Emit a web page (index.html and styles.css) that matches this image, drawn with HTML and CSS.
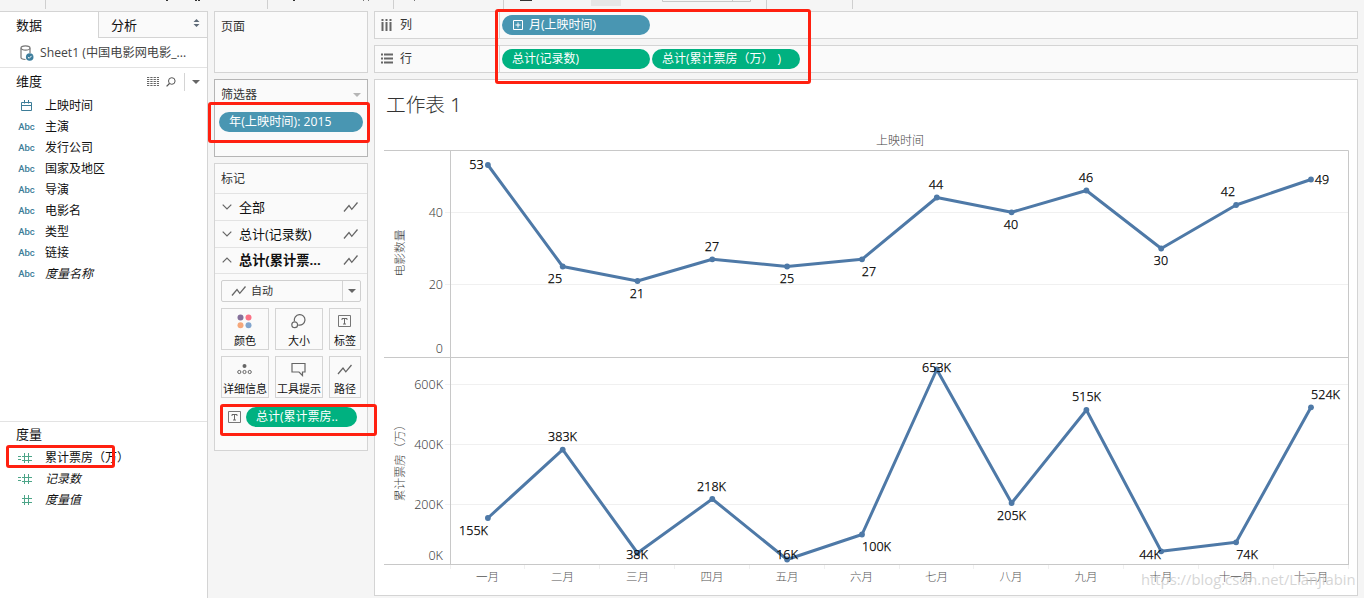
FILE: index.html
```
<!DOCTYPE html>
<html lang="zh-CN">
<head>
  <meta charset="UTF-8" />
  <meta name="viewport" content="width=device-width, initial-scale=1.0">
  <title>工作表 1</title>
  <link rel="stylesheet" href="styles.css">
</head>
<body>

  <!-- shared icons -->
  <svg class="defs" width="0" height="0">
    <symbol id="i-line" viewBox="0 0 16 12"><path d="M1 10.5 6 4.5 8.8 8.3 14.5 1.5" fill="none" stroke="#666" stroke-width="1.3"/></symbol>
    <symbol id="i-down" viewBox="0 0 10 6"><path d="M.7.7 5 5 9.3.7" fill="none" stroke="#666" stroke-width="1.2"/></symbol>
    <symbol id="i-up" viewBox="0 0 10 6"><path d="M.7 5.3 5 1 9.3 5.3" fill="none" stroke="#666" stroke-width="1.2"/></symbol>
    <symbol id="i-label" viewBox="0 0 13 12"><path d="M.5.5h12v11H.5z" fill="none" stroke="#777"/><path d="M4 5V3.500h5V5M6.500 3.500v5.500M5 9h3" fill="none" stroke="#666"/></symbol>
    <symbol id="i-hash" viewBox="0 0 14 10"><path d="M6.5 0v10M10.5 0v10M4 3.5h10M4 7.5h10" fill="none" stroke="#4da588"/></symbol>
    <symbol id="i-hash-calc" viewBox="0 0 14 10"><path d="M6.5 0v10M10.5 0v10M4 3.5h10M4 7.5h10M0 3.5h3M0 6.5h3" fill="none" stroke="#4da588"/></symbol>
  </svg>

  <div class="toolbar">
    <svg width="1364" height="11">
      <path d="M45.5 0v9M267.5 0v9M393.5 0v9M503.5 0v9M766.5 0v9M852.5 0v9" stroke="#cfcfcf"/>
      <path d="M166 0h2v1h-2zM195 0h2v1h-2zM198 0h2v1h-2zM293 0h2v1h-2zM520 0h12v1h-12z" fill="#333"/>
      <path d="M363 0h1v1h-1zM368 0h1v1h-1zM414 0h1v1h-1z" fill="#777"/>
      <path d="M591 0h30v6h-30z" fill="#e6e6e6"/>
      <path d="M662.500 0v1.500h88V0M732.500 0v1" fill="none" stroke="#c8c8c8"/>
    </svg>
  </div>

  <div class="workspace">

    <div class="data-pane">
      <div class="tabs">
        <div class="tab active">数据</div>
        <div class="tab">分析
          <svg width="7" height="8"><path d="M3.500 0 6.500 3h-6zM3.500 8 6.500 5h-6z" fill="#5f6b78"/></svg>
        </div>
      </div>
      <div class="source">
        <svg width="14" height="16" viewBox="0 0 14 16">
          <path d="M1 3.200v9.300c0 1 1.500 1.900 4.500 2M10 3.200V8" fill="none" stroke="#777" stroke-width="1.200"/>
          <ellipse cx="5.500" cy="3" rx="4.500" ry="2.200" fill="none" stroke="#777" stroke-width="1.200"/>
          <circle cx="9.700" cy="12" r="3.800" fill="#3c7d9c"/>
          <path d="M7.900 12.100 9.200 13.300 11.600 10.800" fill="none" stroke="#fff"/>
        </svg>
        <span>Sheet1 (中国电影网电影_...</span>
      </div>

      <div class="dimensions">
        <div class="group-head">
          <h2>维度</h2>
          <svg width="12" height="9"><path d="M0 .5h12M0 2.500h12M0 4.500h12M0 6.500h12M0 8.500h12" stroke="#666" stroke-dasharray="2.300 1"/></svg>
          <svg class="search" width="10" height="10"><circle cx="5.800" cy="4" r="3.300" fill="none" stroke="#555"/><path d="M3.500 6.500.6 9.400" stroke="#555" stroke-width="1.300"/></svg>
          <i class="sep"></i>
          <i class="caret"></i>
        </div>
        <ul class="fields">
          <li><span class="type"><svg width="11" height="11"><path d="M.5 2.500h10v8H.5zM.5 5.500h10M3.500 0v3.500M7.500 0v3.500" fill="none" stroke="#3d7d98"/></svg></span>上映时间</li>
          <li><span class="type">Abc</span>主演</li>
          <li><span class="type">Abc</span>发行公司</li>
          <li><span class="type">Abc</span>国家及地区</li>
          <li><span class="type">Abc</span>导演</li>
          <li><span class="type">Abc</span>电影名</li>
          <li><span class="type">Abc</span>类型</li>
          <li><span class="type">Abc</span>链接</li>
          <li class="italic"><span class="type">Abc</span>度量名称</li>
        </ul>
      </div>

      <div class="measures">
        <div class="group-head"><h2>度量</h2></div>
        <ul class="fields">
          <li class="boxed"><span class="type"><svg width="14" height="10"><use href="#i-hash-calc"/></svg></span>累计票房（万）</li>
          <li class="italic"><span class="type"><svg width="14" height="10"><use href="#i-hash-calc"/></svg></span>记录数</li>
          <li class="italic"><span class="type"><svg width="14" height="10"><use href="#i-hash"/></svg></span>度量值</li>
        </ul>
      </div>
    </div>

    <div class="cards">
      <div class="card pages"><h3>页面</h3></div>

      <div class="card filters">
        <h3>筛选器<i class="caret light"></i></h3>
        <div class="pill blue">年(上映时间): 2015</div>
        <div class="mark-box filter-box"></div>
      </div>

      <div class="card marks">
        <h3>标记</h3>
        <div class="mark-row"><svg width="10" height="6"><use href="#i-down"/></svg><span>全部</span><svg width="16" height="12"><use href="#i-line"/></svg></div>
        <div class="mark-row"><svg width="10" height="6"><use href="#i-down"/></svg><span>总计(记录数)</span><svg width="16" height="12"><use href="#i-line"/></svg></div>
        <div class="mark-row current"><svg width="10" height="6"><use href="#i-up"/></svg><span>总计(累计票...</span><svg width="16" height="12"><use href="#i-line"/></svg></div>

        <div class="mark-body">
          <div class="select">
            <svg width="16" height="12"><use href="#i-line"/></svg>
            <span>自动</span>
            <div class="arrow"><i class="caret"></i></div>
          </div>
          <div class="mark-grid">
            <div class="mark-btn">
              <svg width="15" height="15"><circle cx="3.500" cy="3.500" r="3" fill="#85709a"/><circle cx="11.500" cy="3.500" r="3" fill="#fb7185"/><circle cx="3.500" cy="11.300" r="3" fill="#f5a77a"/><circle cx="11.500" cy="11.300" r="3" fill="#82a5cd"/></svg>
              颜色
            </div>
            <div class="mark-btn">
              <svg width="15" height="15"><path d="M3.500 7.200A5.300 5.300 0 1 1 7.200 11" fill="none" stroke="#666" stroke-width="1.200"/><circle cx="3.700" cy="10.800" r="2.900" fill="none" stroke="#666" stroke-width="1.200"/></svg>
              大小
            </div>
            <div class="mark-btn">
              <svg width="13" height="15" viewBox="0 -1 13 15"><use href="#i-label" width="13" height="12"/></svg>
              标签
            </div>
            <div class="mark-btn">
              <svg width="15" height="15"><circle cx="7.500" cy="4" r="2" fill="#666"/><circle cx="2.300" cy="10" r="1.600" fill="none" stroke="#666"/><circle cx="7.500" cy="10" r="1.600" fill="none" stroke="#666"/><circle cx="12.700" cy="10" r="1.600" fill="none" stroke="#666"/></svg>
              详细信息
            </div>
            <div class="mark-btn">
              <svg width="15" height="15"><path d="M1 1.500h13v8.500h-2.500v3.500L8 10H1z" fill="none" stroke="#666" stroke-width="1.200"/></svg>
              工具提示
            </div>
            <div class="mark-btn">
              <svg width="16" height="15" viewBox="0 -1.500 16 15"><use href="#i-line" width="16" height="12"/></svg>
              路径
            </div>
          </div>
          <div class="mark-label">
            <svg width="13" height="12"><use href="#i-label"/></svg>
            <div class="pill green">总计(累计票房..</div>
            <div class="mark-box label-box"></div>
          </div>
        </div>
      </div>
    </div>

    <div class="view">
      <div class="shelf">
        <div class="shelf-name">
          <svg width="12" height="12"><path d="M1.500 3v9M5.500 3v9M9.500 3v9M1.500 0v2M5.500 0v2M9.500 0v2" stroke="#666" stroke-width="2"/></svg>列
        </div>
        <div class="shelf-body">
          <div class="pill blue dated"><svg width="10" height="10"><path d="M.5.5h9v9h-9zM2.500 5h5M5 2.500v5" fill="none" stroke="#fff"/></svg>月(上映时间)</div>
        </div>
        <div class="mark-box shelf-box"></div>
      </div>
      <div class="shelf">
        <div class="shelf-name">
          <svg width="12" height="12"><path d="M3 1.500h9M3 5.500h9M3 9.500h9M0 1.500h2M0 5.500h2M0 9.500h2" stroke="#666" stroke-width="2"/></svg>行
        </div>
        <div class="shelf-body">
          <div class="pill green">总计(记录数)</div>
          <div class="pill green">总计(累计票房（万）<span class="paren">)</span></div>
        </div>
      </div>

      <div class="sheet">
        <h1>工作表 1</h1>
        <svg class="chart" width="982" height="467" viewBox="375 128 982 467">
          <text class="head" x="900" y="144.500">上映时间</text>

          <path class="grid" d="M445 212.500h903M445 284.500h903M445 384.500h903M445 444.500h903M445 504.500h903"/>
          <path class="grid" d="M450.500 565v4M524.500 565v4M599.500 565v4M674.500 565v4M749.500 565v4M824.500 565v4M899.500 565v4M973.500 565v4M1048.500 565v4M1123.500 565v4M1198.500 565v4M1273.500 565v4M1348.500 565v4"/>
          <path class="frame" d="M384 150.500h964.500v414M384 357.500h964M384 564.500h965M450.500 151v413"/>

          <text class="axis-title" transform="translate(404 253) rotate(-90)">电影数量</text>
          <text class="axis-title" transform="translate(404 460) rotate(-90)">累计票房（万）</text>

          <g class="ticks">
            <text x="443" y="217">40</text>
            <text x="443" y="289">20</text>
            <text x="443" y="353">0</text>
            <text x="443" y="389">600K</text>
            <text x="443" y="449">400K</text>
            <text x="443" y="509">200K</text>
            <text x="443" y="560">0K</text>
          </g>

          <polyline class="line" points="487.900,165 562.700,266.500 637.500,281 712.300,259.300 787.100,266.500 862,259.300 936.800,197.500 1011.600,212.300 1086.400,190.500 1161.200,248.500 1236.100,205 1311,179.500"/>
          <polyline class="line" points="487.900,518 562.700,449.600 637.500,553 712.300,499 787.100,559.500 862,534.500 936.800,369.500 1011.600,503 1086.400,410 1161.200,551.300 1236.100,542.300 1311,407.300"/>

          <g class="labels">
            <text x="476.500" y="169">53</text>
            <text x="555" y="283">25</text>
            <text x="637" y="298">21</text>
            <text x="712" y="251">27</text>
            <text x="787" y="283">25</text>
            <text x="869" y="276">27</text>
            <text x="936" y="189">44</text>
            <text x="1011" y="229">40</text>
            <text x="1086" y="182">46</text>
            <text x="1161" y="265">30</text>
            <text x="1228" y="196">42</text>
            <text x="1322" y="184">49</text>

            <text x="473.500" y="535">155K</text>
            <text x="562.500" y="441">383K</text>
            <text x="637" y="559">38K</text>
            <text x="711.500" y="491">218K</text>
            <text x="787" y="559">16K</text>
            <text x="876.500" y="551">100K</text>
            <text x="936.500" y="372">653K</text>
            <text x="1011.500" y="520">205K</text>
            <text x="1086.500" y="401">515K</text>
            <text x="1150" y="559">44K</text>
            <text x="1247" y="559">74K</text>
            <text x="1325.500" y="399">524K</text>
          </g>

          <g class="months">
            <text x="487.500" y="581">一月</text>
            <text x="562.500" y="581">二月</text>
            <text x="637.500" y="581">三月</text>
            <text x="712" y="581">四月</text>
            <text x="787" y="581">五月</text>
            <text x="861.500" y="581">六月</text>
            <text x="936.500" y="581">七月</text>
            <text x="1011" y="581">八月</text>
            <text x="1086" y="581">九月</text>
            <text x="1161" y="581">十月</text>
            <text x="1236" y="581">十一月</text>
            <text x="1311" y="581">十二月</text>
          </g>
          <text class="watermark" x="1141" y="585">https://blog.csdn.net/Lianjiabin</text>
        </svg>
      </div>
    </div>
  </div>

  <script>
    // round markers on every vertex of both lines
    document.querySelectorAll(".line").forEach(line => {
      Array.from(line.points).forEach(p => {
        const dot = document.createElementNS("http://www.w3.org/2000/svg", "circle");
        dot.setAttribute("class", "dot");
        dot.setAttribute("cx", p.x);
        dot.setAttribute("cy", p.y);
        dot.setAttribute("r", 2.9);
        line.after(dot);
      });
    });
  </script>
</body>
</html>
```
FILE: styles.css
```
* {
  margin: 0;
  padding: 0;
  box-sizing: border-box;
}

body {
  height: 598px;
  overflow: hidden;
  background-color: #f5f5f5;
  color: #111;
  font-family: "Open Sans", "Noto Sans CJK SC", sans-serif;
  font-size: 12px;
  line-height: 16px;
}

svg {
  display: block;
  flex-shrink: 0;
}

.defs {
  position: absolute;
}

.toolbar {
  height: 11px;
}

.workspace {
  display: flex;
  height: 587px;
}

/* data pane */

.data-pane {
  width: 208px;
  background: #fff;
  border-top: 1px solid #d4d4d4;
  border-right: 1px solid #d4d4d4;
}

.tabs {
  display: flex;
  height: 26px;
}

.tab {
  display: flex;
  flex: 1;
  align-items: center;
  justify-content: space-between;
  padding: 0 7px 0 12px;
  background: #fafafa;
  border-left: 1px solid #d4d4d4;
  border-bottom: 1px solid #d4d4d4;
  font-size: 13px;
}

.tab svg {
  margin-top: -3px;
}

.tab.active {
  flex: 0 0 98px;
  padding-left: 16px;
  background: #fff;
  border: none;
}

.source {
  display: flex;
  align-items: center;
  gap: 6px;
  height: 30px;
  padding-left: 20px;
  border-bottom: 1px solid #e3e3e3;
  color: #444;
  font-size: 12.2px;
  white-space: nowrap;
}

.dimensions {
  height: 353px;
}

.group-head {
  display: flex;
  align-items: center;
  height: 27px;
  padding: 0 7px 0 16px;
}

.group-head h2 {
  flex: 1;
  padding-bottom: 2px;
  font-size: 13px;
  font-weight: normal;
}

.search {
  margin: 0 8px 0 7px;
}

.sep {
  width: 1px;
  height: 18px;
  margin-right: 7px;
  background: #d4d4d4;
}

.caret {
  border: 4px solid transparent;
  border-top: 4px solid #666;
  border-bottom: none;
}

.caret.light {
  border-top-color: #b5b5b5;
}

.fields {
  list-style: none;
}

.fields li {
  display: flex;
  align-items: center;
  position: relative;
  height: 21px;
  white-space: nowrap;
}

.fields .italic {
  font-style: italic;
}

.type {
  display: flex;
  justify-content: center;
  width: 17px;
  margin: 0 10px 0 18px;
  color: #3d7d98;
  font: 500 9.5px Roboto, sans-serif;
}

.measures {
  border-top: 1px solid #e3e3e3;
}

.measures .group-head {
  height: 25px;
}

.measures .type {
  justify-content: flex-start;
}

.boxed::after {
  content: "";
  position: absolute;
  left: 6px;
  top: -2px;
  box-sizing: border-box;
  width: 109px;
  height: 23px;
  border: 3px solid #ff2010;
  border-radius: 3px;
}

/* cards */

.cards {
  display: flex;
  flex-direction: column;
  gap: 6px;
  width: 154px;
  margin: 0 6px;
}

.card {
  position: relative;
  background: #fafafa;
  border: 1px solid #d4d4d4;
}

.card h3 {
  display: flex;
  align-items: center;
  justify-content: space-between;
  height: 29px;
  padding: 0 6px;
  color: #333;
  font-size: 12px;
  font-weight: normal;
}

.pages {
  height: 62px;
}

.filters {
  height: 78px;
  border-color: #b5b5b5;
}

.filters .pill {
  width: 144px;
  margin: 3px 0 0 4px;
}

.marks {
  height: 288px;
}

.pill {
  display: flex;
  align-items: center;
  width: 148px;
  height: 20px;
  padding: 0 10px 1px;
  border-radius: 10px;
  color: #fff;
  font-size: 12px;
  white-space: nowrap;
}

.filters .pill {
  font-size: 12.2px;
}

.pill.dated {
  gap: 6px;
  padding: 0 11px;
}

.paren {
  margin-left: 4px;
}

.blue {
  background: #4996b2;
}

.green {
  background: #00b180;
}

/* red highlight frames drawn over the panels */
.mark-box {
  position: absolute;
  z-index: 2;
  border: 3px solid #ff2010;
  border-radius: 3px;
}

.filter-box {
  left: -7px;
  top: 22px;
  width: 162px;
  height: 41px;
}

.label-box {
  left: -1px;
  top: -3px;
  width: 157px;
  height: 32px;
}

.shelf-box {
  left: 120px;
  top: -3px;
  width: 316px;
  height: 75px;
}

.mark-row {
  display: flex;
  align-items: center;
  height: 27px;
  padding: 0 8px 1px 7px;
  border-top: 1px solid #e3e3e3;
  font-size: 13px;
}

.mark-row span {
  flex: 1;
  margin-left: 7px;
}

.mark-row.current {
  font-size: 13.2px;
  font-weight: bold;
  border-bottom: 1px solid #e3e3e3;
}

.mark-body {
  padding: 6px;
}

.select {
  display: flex;
  align-items: center;
  height: 22px;
  padding-left: 9px;
  border: 1px solid #cfcfcf;
  border-radius: 2px;
  color: #333;
  font-size: 11px;
}

.select span {
  flex: 1;
  margin-left: 4px;
}

.select .arrow {
  display: flex;
  align-items: center;
  justify-content: center;
  width: 18px;
  height: 20px;
  border-left: 1px solid #d4d4d4;
}

.mark-grid {
  display: grid;
  grid-template-columns: 48px 48px 32px;
  grid-auto-rows: 42px;
  gap: 6px;
  margin-top: 6px;
}

.mark-btn {
  display: flex;
  flex-direction: column;
  align-items: center;
  padding-top: 5px;
  border: 1px solid #d4d4d4;
  font-size: 11px;
  line-height: 14px;
  gap: 5px;
  white-space: nowrap;
}

.mark-btn svg {
  margin-right: 1px;
}

.mark-label {
  display: flex;
  align-items: center;
  gap: 5px;
  position: relative;
  margin-top: 9px;
  padding-left: 7px;
}

.mark-label .pill {
  width: 111px;
}

/* shelves and sheet */

.view {
  display: flex;
  flex-direction: column;
  gap: 6px;
  width: 984px;
}

.shelf {
  display: flex;
  position: relative;
  height: 28px;
  background: #fafafa;
  border: 1px solid #d4d4d4;
}

.shelf-name {
  display: flex;
  align-items: center;
  gap: 7px;
  width: 125px;
  padding-left: 6px;
  border-right: 1px solid #d4d4d4;
  color: #333;
}

.shelf-body {
  display: flex;
  gap: 2px;
  padding: 3px 2px;
}

.sheet {
  height: 517px;
  background: #fff;
  border: 1px solid #d4d4d4;
}

.sheet h1 {
  height: 48px;
  padding-left: 11px;
  color: #333;
  font-family: "Noto Sans", "Noto Sans CJK SC", sans-serif;
  font-size: 19.7px;
  font-weight: 300;
  line-height: 50px;
}

.chart text {
  font-family: "Noto Sans", "Noto Sans CJK SC", sans-serif;
  font-size: 12.5px;
  font-weight: 300;
  text-anchor: middle;
}

.chart .head {
  fill: #444;
  font-size: 12px;
}

.chart .axis-title {
  fill: #444;
  font-size: 11.8px;
}

.chart .ticks text {
  fill: #444;
  text-anchor: end;
}

.chart .months text {
  fill: #555;
  font-size: 11.5px;
}

/* the light face reads too pale at this size, a hairline stroke firms it up */
.labels text {
  fill: #000;
  stroke: #000;
  stroke-width: 0.25;
}

.grid {
  stroke: #f0f0f0;
}

.frame {
  fill: none;
  stroke: #c8c8c8;
}

.line {
  fill: none;
  stroke: #4e79a7;
  stroke-width: 3;
  stroke-linejoin: round;
}

.dot {
  fill: #4e79a7;
}

.chart .watermark {
  fill: #c8c8c8;
  fill-opacity: 0.75;
  font-family: "Open Sans", sans-serif;
  font-size: 14.8px;
  font-weight: normal;
  text-anchor: start;
}
```
